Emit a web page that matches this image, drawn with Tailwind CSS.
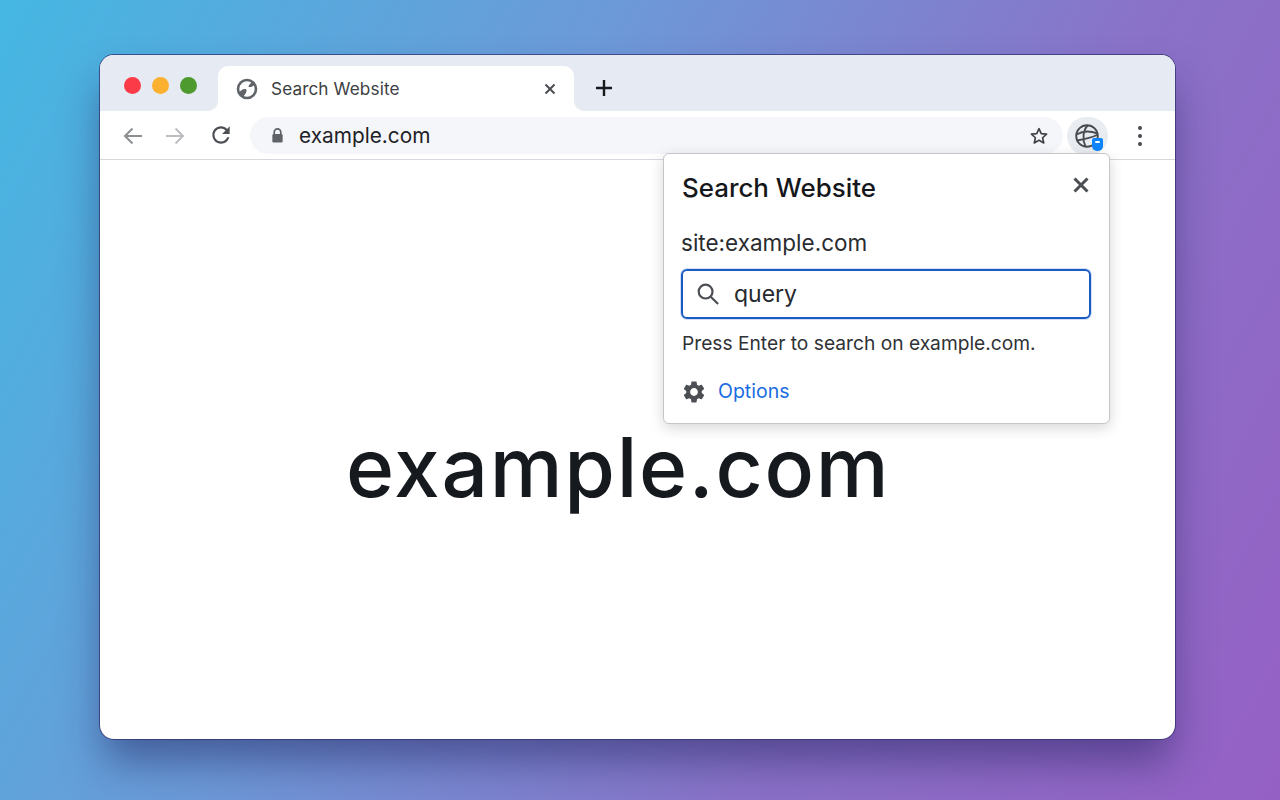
<!DOCTYPE html>
<html lang="en">
<head>
<meta charset="UTF-8">
<title>Search Website</title>
<script src="https://cdn.jsdelivr.net/npm/@tailwindcss/browser@4"></script>
</head>
<body class="font-['Inter',sans-serif]">
<div class="h-[800px] w-[1280px] overflow-hidden pt-[55px] pl-[100px] bg-[linear-gradient(118deg,#45b7e2_0%,#6c9ad8_36%,#8a72c8_68%,#9560c4_100%)]">
  <div class="relative h-[684px] w-[1075px] rounded-[14px] bg-white shadow-[0_0_0_1px_rgba(50,50,110,0.75),0_26px_42px_-4px_rgba(30,30,90,0.5)]">

    <!-- tab strip -->
    <div class="flex h-[56px]">
      <div class="flex w-[118px] items-center gap-[11px] rounded-tl-[14px] rounded-br-[10px] bg-[#e6eaf2] pt-[4px] pl-[24px]">
        <span class="size-[17px] rounded-full bg-[#fb3b47]"></span>
        <span class="size-[17px] rounded-full bg-[#fbb02f]"></span>
        <span class="size-[17px] rounded-full bg-[#4f9a2f]"></span>
      </div>
      <div class="flex w-[356px] items-end bg-[#e6eaf2]">
        <div class="flex h-[45px] w-full items-center rounded-t-[10px] bg-white pl-[18px] pr-[18px]">
          <svg class="size-[22px] shrink-0" viewBox="0 0 22 22">
            <circle cx="11" cy="11" r="9" fill="none" stroke="#5f6368" stroke-width="2.600"/>
            <path d="M3.500 14c2-2.500 4.500-3.500 6-3 1.200.4 1.300 1.800.8 3-.5 1.500-1.500 3-3 4.500-2-.8-3.300-2.500-3.800-4.500zM12.500 8c.8-1.500 2.300-3 3.800-4l2 3c-1 .9-2.300 1.800-3.500 2.100-1.300.3-2.700-.2-2.300-1.100z" fill="#5f6368"/>
          </svg>
          <span class="ml-[13px] pt-[1px] text-[17.200px] leading-none tracking-[0.1px] text-[#3c4043]">Search Website</span>
          <svg class="ml-auto size-[12px]" viewBox="0 0 12 12"><path d="M1.500 1.500l9 9M10.500 1.500l-9 9" stroke="#4b4e53" stroke-width="2"/></svg>
        </div>
      </div>
      <div class="flex flex-1 items-center rounded-tr-[14px] rounded-bl-[10px] bg-[#e6eaf2] pl-[22px] pt-[10px]">
        <svg class="size-[16px]" viewBox="0 0 16 16"><path d="M8 0v16M0 8h16" stroke="#17191c" stroke-width="2.400"/></svg>
      </div>
    </div>

    <!-- toolbar -->
    <div class="flex h-[49px] items-center border-b border-[#d6d8dc] pl-[22px] pt-[1px]">
      <svg class="size-[22px]" viewBox="0 0 22 22" fill="none" stroke="#8b8e93" stroke-width="2"><path d="M20 11H3M10.500 3.500L3 11l7.500 7.500"/></svg>
      <svg class="ml-[20px] size-[22px]" viewBox="0 0 22 22" fill="none" stroke="#bcbec2" stroke-width="2"><path d="M2 11h17M11.500 3.500L19 11l-7.500 7.500"/></svg>
      <svg class="ml-[22px] size-[26px] -translate-y-[1px]" viewBox="0 0 24 24" fill="#4b4e53"><path d="M17.650 6.350C16.200 4.900 14.210 4 12 4c-4.420 0-7.990 3.580-7.990 8s3.570 8 7.990 8c3.730 0 6.840-2.550 7.730-6h-2.080c-.82 2.330-3.040 4-5.650 4-3.310 0-6-2.690-6-6s2.690-6 6-6c1.660 0 3.140.69 4.220 1.780L13 11h7V4l-2.350 2.350z"/></svg>
      <div class="ml-[16px] flex h-[37px] w-[813px] items-center rounded-full bg-[#f4f6fa] pl-[20px] pr-[14px]">
        <svg class="size-[15px] shrink-0" viewBox="0 0 14 16" fill="#5f6368"><path d="M3.500 7V4.500a3.500 3.500 0 017 0V7" fill="none" stroke="#5f6368" stroke-width="1.800"/><rect x="1.500" y="6.500" width="11" height="9" rx="1.500"/></svg>
        <span class="ml-[14px] pt-[1px] text-[20.800px] leading-none text-[#1f2226]">example.com</span>
        <svg class="ml-auto size-[20px]" viewBox="0 0 24 24" fill="none" stroke="#3f4246" stroke-width="2" stroke-linejoin="round"><path d="M12 3.200l2.700 5.900 6.400.7-4.800 4.300 1.400 6.300-5.700-3.300-5.700 3.300 1.400-6.300-4.800-4.300 6.400-.7z"/></svg>
      </div>
      <div class="relative ml-[4px] flex h-[38px] w-[41px] items-center justify-center rounded-full bg-[#e9edf2]">
        <svg class="size-[24px] -translate-x-[1px]" viewBox="0 0 24 24" fill="none" stroke="#494c50" stroke-width="1.900">
          <circle cx="12" cy="12" r="10.800"/>
          <path d="M1.500 10.500c6-3.500 13-4 21-1M2 16.500c6-1 12-2 20-5.500M13 1.300C8 6 7 15 10.500 22.700"/>
        </svg>
        <span class="absolute left-[25px] top-[21px] flex h-[13px] w-[11px] items-start justify-center rounded-t-[2px] rounded-b-[5px] bg-[#0a84ff] pt-[3px]">
          <span class="h-[2px] w-[5px] rounded-sm bg-white"></span>
        </span>
      </div>
      <div class="ml-[30px] flex flex-col gap-[4px]">
        <span class="size-[4px] rounded-full bg-[#45484c]"></span>
        <span class="size-[4px] rounded-full bg-[#45484c]"></span>
        <span class="size-[4px] rounded-full bg-[#45484c]"></span>
      </div>
    </div>

    <!-- page -->
    <div class="pl-[246px] pt-[258px] text-[82px] font-medium leading-[100px] tracking-[1.700px] text-[#16191e]">example.com</div>

    <!-- popup -->
    <div class="absolute left-[563px] top-[98px] h-[271px] w-[447px] rounded-[6px] border border-[#c4c6c9] bg-white pl-[17px] pr-[20px] pt-[19px] shadow-[0_4px_14px_rgba(0,0,0,0.16)]">
      <div class="flex items-center justify-between">
        <span class="ml-[1px] text-[25.900px] font-medium leading-[30px] text-[#15171a]">Search Website</span>
        <svg class="size-[16px] -translate-y-[3px]" viewBox="0 0 16 16"><path d="M1.500 1.500l13 13M14.500 1.500l-13 13" stroke="#4b4e53" stroke-width="3"/></svg>
      </div>
      <div class="mt-[27px] text-[22.500px] leading-[26px] text-[#292c30]">site:example.com</div>
      <div class="mt-[13px] flex h-[50px] w-[410px] items-center rounded-[6px] border-2 border-[#1a5bc4] pl-[13px] shadow-[0_0_0_1px_rgba(26,91,196,0.2)]">
        <svg class="size-[24px] shrink-0" viewBox="0 0 25 25" fill="none" stroke="#4b4e53" stroke-width="2.300"><circle cx="10" cy="10" r="7.200"/><path d="M15.300 15.300l7.700 7.700"/></svg>
        <span class="ml-[14px] text-[23px] leading-none text-[#26292d]">query</span>
      </div>
      <div class="ml-[1px] mt-[12px] text-[19.200px] leading-[24px] text-[#2f3236]">Press Enter to search on example.com.</div>
      <div class="mt-[24px] flex items-center">
        <svg class="size-[26px] shrink-0" viewBox="0 0 24 24" fill="#4b4e53"><path d="M19.140 12.940c.04-.3.060-.61.060-.94 0-.32-.020-.64-.070-.94l2.030-1.580c.18-.14.230-.41.120-.61l-1.920-3.320c-.12-.22-.37-.29-.59-.22l-2.390.96c-.5-.38-1.030-.7-1.620-.94l-.36-2.540c-.040-.24-.24-.41-.48-.41h-3.840c-.24 0-.43.170-.47.410l-.36 2.540c-.59.24-1.130.57-1.620.94l-2.390-.96c-.22-.08-.47 0-.59.22L2.740 8.870c-.12.21-.080.47.12.61l2.030 1.580c-.050.3-.090.63-.090.94s.020.64.070.94l-2.030 1.580c-.18.14-.23.41-.12.61l1.920 3.320c.12.22.37.29.59.22l2.390-.96c.5.38 1.030.7 1.620.94l.36 2.540c.050.24.24.41.48.41h3.840c.24 0 .44-.17.47-.41l.36-2.540c.59-.24 1.130-.56 1.620-.94l2.390.96c.22.080.47 0 .59-.22l1.920-3.320c.12-.22.070-.47-.12-.61l-2.010-1.580zM12 15.600c-1.980 0-3.600-1.620-3.600-3.600s1.620-3.600 3.600-3.600 3.600 1.620 3.600 3.600-1.620 3.600-3.600 3.600z"/></svg>
        <span class="ml-[11px] text-[19.500px] leading-none text-[#1a6ce0]">Options</span>
      </div>
    </div>
  </div>
</div>
</body>
</html>
